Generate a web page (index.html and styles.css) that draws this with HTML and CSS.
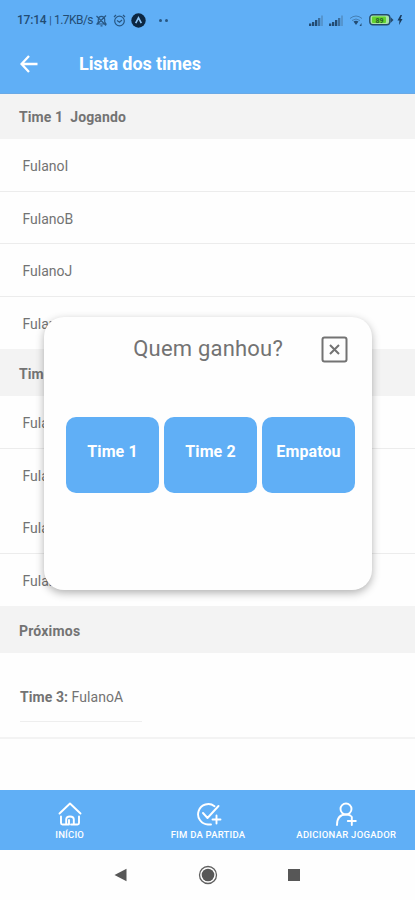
FILE: index.html
```html
<!DOCTYPE html>
<html lang="pt-BR">
<head>
<meta charset="utf-8">
<title>Lista dos times</title>
<link rel="stylesheet" href="styles.css">
</head>
<body>
<header class="top">
  <div class="status">
    <span class="clock">17:14</span><span class="sep">|</span><span class="rate">1.7KB/s</span>
    <svg class="mute" width="13" height="13" viewBox="0 0 13 13"><path d="M2 10h9L9.700 8V5.500a3.200 3.200 0 0 0-6.400 0V8zM5.500 11.800h2M1.500 2l9.500 9.500M11 1.500l-9 9"/></svg>
    <svg class="alarm" width="13" height="13" viewBox="0 0 13 13"><circle cx="6.500" cy="7" r="4.800"/><path d="M1 3l2-2M12 3l-2-2M4 6.500l2.500 1.700L9 6"/></svg>
    <svg class="app" width="15" height="15" viewBox="0 0 15 15"><circle cx="7.500" cy="7.500" r="7.200" fill="#0c2742"/><path d="M4.700 10.200L7.500 4.800l2.800 5.400" fill="none" stroke="#8cc4f5" stroke-width="1.600"/></svg>
    <span class="dots"><i></i><i></i></span>
    <span class="right">
      <svg width="15" height="11" viewBox="0 0 15 11"><path class="on" d="M0 8.500h2.300V11H0zM3 7h2.300v4H3zM6 5h2.300v6H6z"/><path class="off" d="M9 3h2.300v8H9z"/><path class="low" d="M12 .5h2V11h-2z"/></svg>
      <svg width="15" height="11" viewBox="0 0 15 11"><path class="on" d="M0 8.500h2.300V11H0zM3 7h2.300v4H3zM6 5h2.300v6H6z"/><path class="off" d="M9 3h2.300v8H9z"/><path class="low" d="M12 .5h2V11h-2z"/></svg>
      <svg class="wifi" width="15" height="13" viewBox="0 0 15 13"><path d="M1 4.500q6-5 12 0M3 6.500q4-3 8 0" fill="none" stroke="#4580b4"/><path d="M4.500 7.500q2.500-1.500 5 0L7 11z" fill="#234c73"/><path d="M10.500 12l2-3v3" fill="#234c73"/></svg>
      <svg width="25" height="12" viewBox="0 0 25 12"><rect x=".8" y=".8" width="20" height="10" rx="3" fill="#a9e5a8" stroke="#244a6d" stroke-width="1.400"/><rect x="3" y="2.500" width="14" height="6.600" rx="1" fill="#62d32f"/><path d="M21.500 3l3 3-3 3z" fill="#244a6d"/><text x="10.500" y="8.500" text-anchor="middle">89</text></svg>
      <svg class="bolt" width="6" height="10" viewBox="0 0 6 10"><path d="M3.500 0L.5 5.500h2L2 10l3.500-6h-2L5 0z"/></svg>
    </span>
  </div>
  <div class="title">
    <svg width="18" height="18" viewBox="0 0 18 18"><path d="M17.500 9H2M9 1L1.500 9 9 17" fill="none" stroke="#fff" stroke-width="2.300"/></svg>
    <h1>Lista dos times</h1>
  </div>
</header>
<main>
  <h2 class="first">Time 1&nbsp; Jogando</h2>
  <ul>
    <li>FulanoI</li><li>FulanoB</li><li>FulanoJ</li><li>FulanoC</li>
  </ul>
  <h2>Time 2&nbsp; Jogando</h2>
  <ul>
    <li>FulanoD</li><li class="plain">FulanoE</li><li>FulanoF</li><li>FulanoG</li>
  </ul>
  <h2 class="next">Próximos</h2>
  <div class="queue"><p><b>Time 3:</b> FulanoA</p></div>
</main>
<nav class="tabs">
  <a><svg width="24" height="24" viewBox="0 0 24 24"><path d="M1.500 11.500L12 1.500l10.500 10M3 14.500v6.500c0 1 .5 1.500 1.500 1.500h3.700V17.500c0-4 7.600-4 7.600 0v5h3.700c1 0 1.500-.5 1.500-1.500v-6.500M8 22.500h3v-4.500M16 22.500h-3"/></svg><span class="l1">INÍCIO</span></a>
  <a><svg class="check" width="26" height="24" viewBox="0 0 26 24"><path d="M18.500 4.200A10.200 10.200 0 1 0 12 22.500h3M7 11l4.500 5L22.500 4M20.500 13.500v8M16.500 17.500h8"/></svg><span class="l2">FIM DA PARTIDA</span></a>
  <a><svg width="24" height="24" viewBox="0 0 24 24"><circle cx="12" cy="7" r="5.500"/><path d="M3 23c0-7 3.500-10.500 9-10.500 2 0 3.500.5 4.700 1.300M17.800 15v8M13.800 19h8"/></svg><span class="l3">ADICIONAR JOGADOR</span></a>
</nav>
<footer class="system">
  <svg width="13" height="14" viewBox="0 0 13 14"><path d="M.5 7L12.500 .7v12.600z"/></svg>
  <svg width="20" height="20" viewBox="0 0 20 20"><circle cx="10" cy="10" r="8.500" fill="none" stroke="#606060" stroke-width="1.300"/><circle cx="10" cy="10" r="6.300"/></svg>
  <svg width="12" height="12" viewBox="0 0 12 12"><path d="M0 0h12v12H0z"/></svg>
</footer>
<section class="dialog">
  <div class="head">
    <h3>Quem ganhou?</h3>
    <svg width="27" height="27" viewBox="0 0 27 27"><rect x="1.500" y="1.500" width="24" height="24" rx="2" stroke-width="2"/><path d="M9 9l9 9M18 9l-9 9" stroke-width="2"/></svg>
  </div>
  <div class="choices"><button>Time 1</button><button>Time 2</button><button>Empatou</button></div>
</section>
</body>
</html>
```
FILE: styles.css
```css
* { box-sizing: border-box; }
body { margin: 0; width: 415px; height: 900px; overflow: hidden; background: #fefefe; color: #737373; font-family: Roboto, sans-serif; display: flex; flex-direction: column; }
svg { flex: none; display: block; }
h1, h2, h3, p, ul { margin: 0; padding: 0; }
.top { height: 94px; background: #60aff6; border-bottom: 1px solid #69a9e6; flex: none; }
.status { height: 40px; padding: 0 12px 0 17px; display: flex; align-items: center; color: #234c73; font-size: 12px; }
.clock { width: 30px; font-weight: 500; letter-spacing: -.2px; }
.sep { width: 7px; text-align: center; font-size: 10px; }
.rate { width: 41px; letter-spacing: -.55px; }
.mute, .alarm { fill: none; stroke: #285783; stroke-width: 1.2; }
.alarm { margin-left: 5px; }
.app { margin-left: 5px; }
.dots { display: flex; gap: 3px; margin-left: 13px; }
.dots i { width: 3px; height: 3px; border-radius: 50%; background: #285783; }
.right { margin-left: auto; display: flex; align-items: center; gap: 5px; }
.on { fill: #234c73; }
.off { fill: #3b6d9c; }
.low { fill: #5595cf; }
.bolt { margin-left: -2px; fill: #183a5c; }
.right text { font: bold 7px Roboto, sans-serif; fill: #28602c; }
.title { display: flex; align-items: center; height: 47px; padding-left: 20px; gap: 41px; }
h1 { color: #fff; font-size: 18px; font-weight: 700; letter-spacing: -.1px; }
main { height: 696px; flex: none; }
h2 { height: 48px; padding-left: 19px; line-height: 50px; background: #f3f3f3; font-size: 14px; font-weight: 700; letter-spacing: .1px; }
h2.first { height: 45px; line-height: 47px; }
h2.next { line-height: 51px; letter-spacing: .2px; }
ul { list-style: none; height: 210px; display: grid; grid-template-rows: repeat(4, 52.5px); }
li { padding: 1px 0 0 22.5px; line-height: 52px; font-size: 14px; border-bottom: 1px solid #ececec; }
li:last-child, li.plain { border-color: transparent; }
ul + h2 { height: 47px; }
.queue { height: 86px; padding: 26px 20px 0; border-bottom: 2px solid #f3f3f3; }
.queue p { width: 122px; height: 43px; line-height: 36px; font-size: 14px; letter-spacing: .07px; border-bottom: 1px solid #eee; }
.tabs { height: 60px; flex: none; background: #60aff6; display: grid; grid-template-columns: repeat(3, 1fr); }
.tabs a { display: flex; flex-direction: column; align-items: center; padding: 12px 0 0 1px; color: #fff; font-size: 9.5px; font-weight: 500; line-height: 17px; white-space: nowrap; }
.tabs svg { fill: none; stroke: #fff; stroke-width: 1.9; stroke-linecap: round; stroke-linejoin: round; }
.tabs .check { margin-left: 2px; }
.l1 { letter-spacing: .2px; }
.l2 { letter-spacing: .22px; }
.l3 { letter-spacing: .27px; }
.system { height: 50px; flex: none; display: flex; align-items: center; gap: 71px; padding-left: 114px; fill: #575757; }
.system svg:last-child { margin-left: -1px; }
.dialog { position: absolute; left: 44px; top: 317px; width: 328px; height: 273px; border-radius: 20px; background: #fefefe; box-shadow: 0 3px 9px rgba(0,0,0,.3); }
.head { height: 65px; display: flex; align-items: center; justify-content: flex-end; gap: 38px; padding-right: 24px; }
h3 { font-size: 22px; font-weight: 400; letter-spacing: .2px; padding-bottom: 2px; }
.head svg { fill: none; stroke: #737373; }
.choices { display: grid; grid-template-columns: repeat(3, 93px); gap: 5px; padding: 35px 22px 0; }
button { height: 76px; border: 0; border-radius: 10px; background: #60aff6; color: #fff; font: 700 16px Roboto, sans-serif; letter-spacing: .1px; padding: 0 0 8px; }
```
